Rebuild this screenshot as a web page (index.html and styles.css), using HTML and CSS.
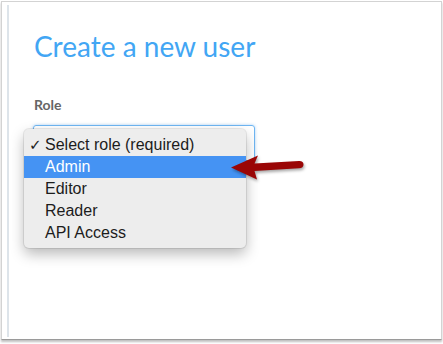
FILE: index.html
```html
<!DOCTYPE html>
<html lang="en">
<head>
    <meta charset="UTF-8">
    <title>Create a new user</title>
    <link rel="stylesheet" href="styles.css">
</head>
<body>

    <div class="frame">
        <div class="panel">
            <h1 class="page-title">Create a new user</h1>

            <div class="field">
                <label class="field-label">Role</label>
                <div class="select-box">
                    <!-- open dropdown menu -->
                    <ul class="select-menu">
                        <li class="menu-item checked"><span class="check">✓</span>Select role (required)</li>
                        <li class="menu-item active">Admin</li>
                        <li class="menu-item">Editor</li>
                        <li class="menu-item">Reader</li>
                        <li class="menu-item">API Access</li>
                    </ul>
                </div>
            </div>
        </div>

        <!-- annotation arrow -->
        <svg class="callout-arrow" width="80" height="32" viewBox="0 0 80 32">
            <path d="M4 14.5 L31 2.5 L27.5 10.5 L72 8 Q76.5 7.8 76.5 11.5 Q76.5 15 72 15.2 L27.5 18 L30 26.5 Z" fill="#9a0606"/>
        </svg>
    </div>

</body>
</html>
```

FILE: styles.css
```css
:root {
    --title-blue: #42a6f4;
    --label-gray: #666;
    --menu-bg: #ededed;
    --menu-active: #4593f3;
    --font-ui: 'Lato', 'Open Sans', sans-serif;
    --font-menu: 'Liberation Sans', Arial, sans-serif;
}

html, body {
    margin: 0;
    background: #fff;
}

body {
    width: 443px;
    height: 344px;
    overflow: hidden;
}

/* outer screenshot frame */
.frame {
    position: relative;
    margin: 1px 1px 0 1px;
    height: 337px;
    border: 1px solid #d3d3d3;
    border-bottom-color: #9a9a9a;
    box-shadow: 0 2px 2px rgba(0, 0, 0, 0.25);
}

.panel {
    margin: 3px 0 0 5px;
    height: 332px;
    border-left: 2px solid #dde4ea;
    padding: 24px 0 0 25px;
    box-sizing: border-box;
}

.page-title {
    margin: 0;
    font-family: var(--font-ui);
    font-weight: 400;
    font-size: 28px;
    line-height: 34px;
    color: var(--title-blue);
}

.field {
    margin-top: 33px;
}

.field-label {
    display: block;
    font-family: var(--font-ui);
    font-weight: 700;
    font-size: 14px;
    line-height: 17px;
    color: var(--label-gray);
}

.select-box {
    position: relative;
    margin: 12px 0 0 -1px;
    width: 220px;
    height: 34px;
    border: 1px solid #6fb6f2;
    border-radius: 3px;
    box-shadow: 0 0 3px rgba(80, 160, 240, 0.5);
}

.select-menu {
    position: absolute;
    left: -10px;
    top: 3px;
    width: 222px;
    margin: 0;
    padding: 5px 0 4px;
    list-style: none;
    background: var(--menu-bg);
    border-radius: 5px;
    box-shadow: 0 0 0 1px rgba(0, 0, 0, 0.08), 0 6px 14px rgba(0, 0, 0, 0.28);
    font-family: var(--font-menu);
    font-size: 16px;
    color: #1c1c1c;
}

.menu-item {
    position: relative;
    height: 22px;
    line-height: 22px;
    padding-left: 21px;
}

.menu-item .check {
    position: absolute;
    left: 5px;
    font-size: 15px;
    font-family: 'DejaVu Sans', sans-serif;
}

.menu-item.active {
    background: var(--menu-active);
    color: #fff;
}

.callout-arrow {
    position: absolute;
    left: 225px;
    top: 151px;
    filter: drop-shadow(1px 2px 1.5px rgba(0, 0, 0, 0.35));
}
```
